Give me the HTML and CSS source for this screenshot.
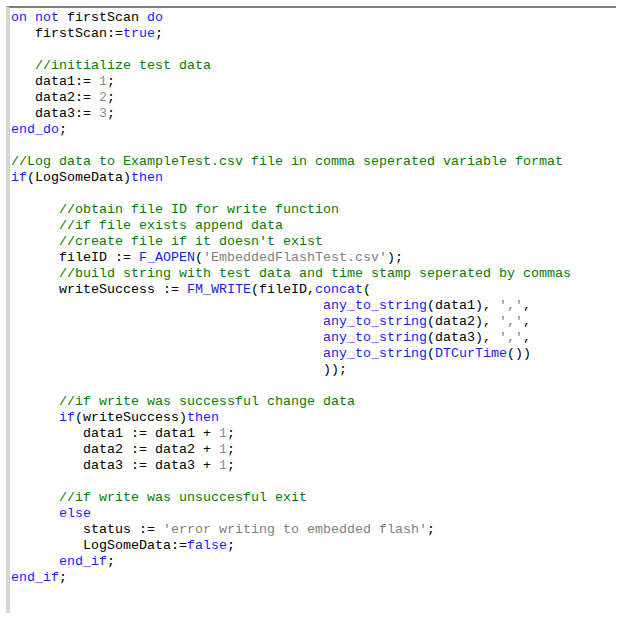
FILE: index.html
```html
<!DOCTYPE html>
<html>
<head>
<meta charset="utf-8">
<link rel="stylesheet" href="styles.css">
</head>
<body>
<div class="editor">
<pre class="code"><span class="k">on not</span> firstScan <span class="k">do</span>
   firstScan:=<span class="k">true</span>;

   <span class="c">//initialize test data</span>
   data1:= <span class="n">1</span>;
   data2:= <span class="n">2</span>;
   data3:= <span class="n">3</span>;
<span class="k">end_do</span>;

<span class="c">//Log data to ExampleTest.csv file in comma seperated variable format</span>
<span class="k">if</span>(LogSomeData)<span class="k">then</span>

      <span class="c">//obtain file ID for write function</span>
      <span class="c">//if file exists append data</span>
      <span class="c">//create file if it doesn't exist</span>
      fileID := <span class="k">F_AOPEN</span>(<span class="s">'EmbeddedFlashTest.csv'</span>);
      <span class="c">//build string with test data and time stamp seperated by commas</span>
      writeSuccess := <span class="k">FM_WRITE</span>(fileID,<span class="k">concat</span>(
                                       <span class="k">any_to_string</span>(data1), <span class="s">','</span>,
                                       <span class="k">any_to_string</span>(data2), <span class="s">','</span>,
                                       <span class="k">any_to_string</span>(data3), <span class="s">','</span>,
                                       <span class="k">any_to_string</span>(<span class="k">DTCurTime</span>())
                                       ));

      <span class="c">//if write was successful change data</span>
      <span class="k">if</span>(writeSuccess)<span class="k">then</span>
         data1 := data1 + <span class="n">1</span>;
         data2 := data2 + <span class="n">1</span>;
         data3 := data3 + <span class="n">1</span>;

      <span class="c">//if write was unsuccesful exit</span>
      <span class="k">else</span>
         status := <span class="s">'error writing to embedded flash'</span>;
         LogSomeData:=<span class="k">false</span>;
      <span class="k">end_if</span>;
<span class="k">end_if</span>;
</pre>
</div>
</body>
</html>
```
FILE: styles.css
```css
html, body {
  margin: 0;
  padding: 0;
  background: #ffffff;
}
.editor {
  margin: 6px 0 0 6px;
  width: 606px;
  height: 605px;
  border-top: 2px solid #7f7f7f;
  border-left: 4px solid #d6d6d6;
  background: #ffffff;
}
.code {
  margin: 0;
  padding: 2px 0 0 1px;
  font-family: "Liberation Mono", "Courier New", monospace;
  font-size: 13.33px;
  line-height: 16px;
  color: #000000;
}
.k { color: #1a1aff; }
.c { color: #008000; }
.s { color: #808080; }
.n { color: #909090; }
```
